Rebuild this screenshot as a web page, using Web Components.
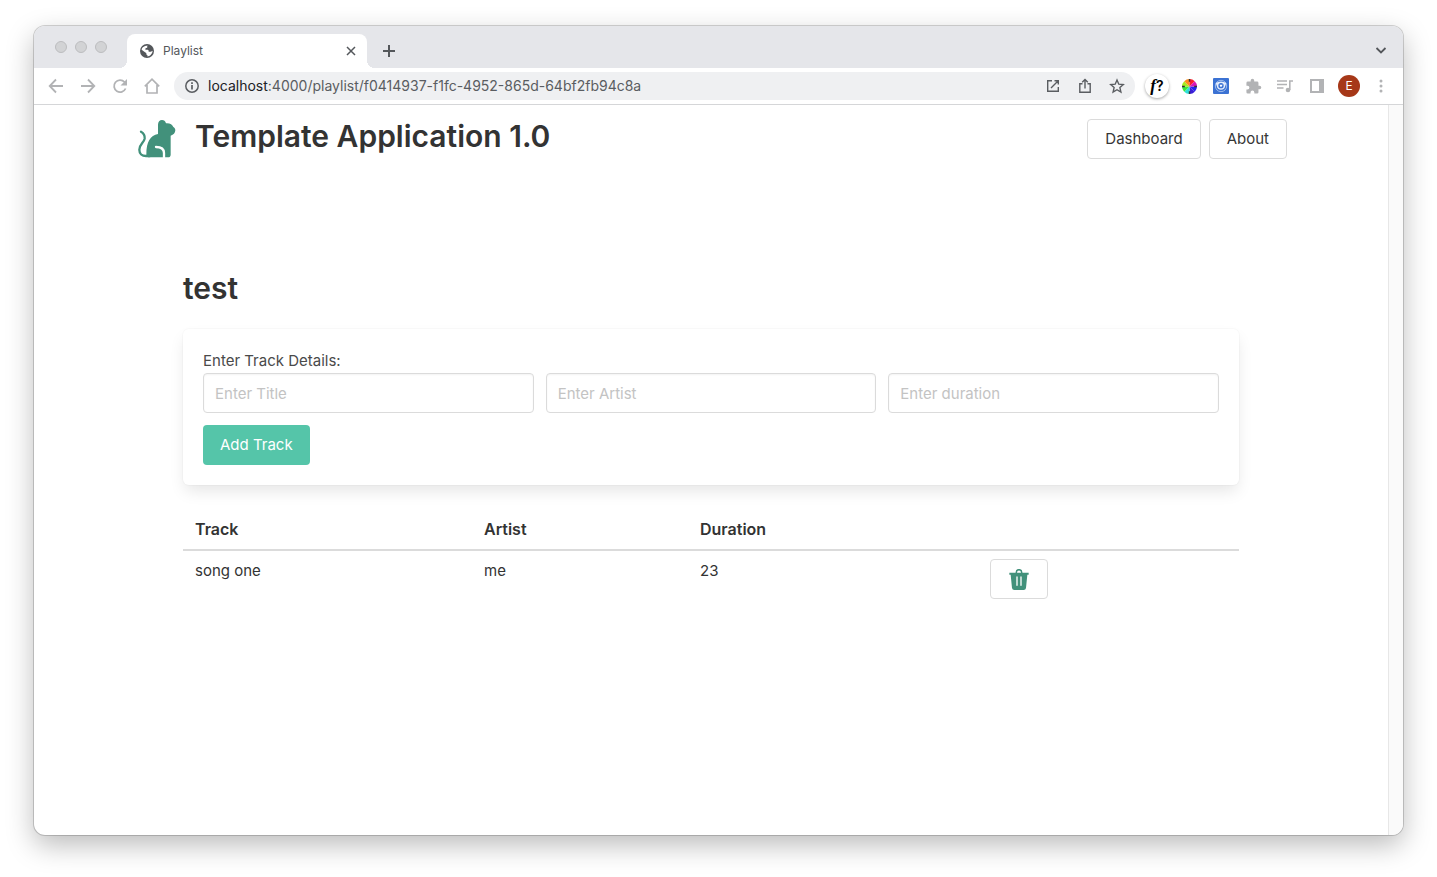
<!DOCTYPE html>
<html lang="en">
<head>
<meta charset="utf-8">
<title>Playlist</title>
<style>
  html, body { margin: 0; background: #fff; }
  body {
    min-height: 100vh; box-sizing: border-box; padding: 26px 34px 42px;
    display: flex; flex-direction: column;
    font-family: Inter, "Liberation Sans", sans-serif; font-size: 15px; line-height: 24px; color: #333;
  }
  browser-window { flex: 1; }
</style>
</head>
<body>
<browser-window>
  <tab-strip slot="chrome" label="Playlist"></tab-strip>
  <browser-toolbar slot="chrome"></browser-toolbar>
  <site-header heading="Template Application 1.0">
    <app-link href="#dashboard">Dashboard</app-link>
    <app-link href="#about">About</app-link>
  </site-header>
  <playlist-view heading="test">
    <track-form></track-form>
    <track-table></track-table>
  </playlist-view>
</browser-window>

<script>
const define = (name, render) => customElements.define(name, class extends HTMLElement {
  connectedCallback() {
    if (this.shadowRoot) return;
    this.attachShadow({ mode: 'open' }).innerHTML =
      '<style>:host,*{box-sizing:border-box}a,button,input{font:inherit;line-height:inherit}svg{display:block}</style>' + render(this);
  }
});

define('browser-window', () => `
<style>
  :host { display: flex; flex-direction: column; border-radius: 11px; overflow: hidden; background: #fff;
    box-shadow: 0 0 0 1px #00000026, 0 0 1px #00000030, 0 10px 28px #00000045; }
  .page { flex: 1; display: flex; }
  main { flex: 1; min-width: 0; }
  .track { width: 15px; background: #fafafa; border-left: 1px solid #e7e7e7; }
</style>
<slot name="chrome"></slot>
<div class="page"><main><slot></slot></main><div class="track"></div></div>`);

define('tab-strip', el => `
<style>
  :host { display: flex; height: 42px; background: #e5e6ea; color: #54575b; font-size: 12px; line-height: 16px; }
  .lights { display: flex; gap: 8px; padding: 15px 20px 0 21px; }
  .lights i { width: 12px; height: 12px; border-radius: 50%; background: #d2d3d5; border: 1px solid #bcbdbf; }
  .tab { position: relative; display: flex; align-items: center; gap: 9px; width: 240px; margin-top: 8px; padding: 0 9px 0 13px;
    background: #fff; border-radius: 8px 8px 0 0; }
  .tab::before, .tab::after { content: ""; position: absolute; bottom: 0; width: 8px; height: 8px; }
  .tab::before { right: 100%; background: radial-gradient(circle at 0 0, #0000 8px, #fff 8px); }
  .tab::after { left: 100%; background: radial-gradient(circle at 100% 0, #0000 8px, #fff 8px); }
  .tab span { flex: 1; }
  button { border: 0; background: none; padding: 0; width: 14px; height: 14px; color: inherit; }
  .new { width: 16px; height: 16px; margin: 17px 0 0 14px; }
  .more { width: 16px; height: 16px; margin: 16px 14px 0 auto; }
</style>
<div class="lights"><i></i><i></i><i></i></div>
<div class="tab">
  <svg width="14" height="14" viewBox="0 0 42 42"><circle cx="21" cy="21" r="21" fill="#54575b"/><path d="M24 5c-1 5-3 7-7 7l-1 5h7c3 0 3 3 3 6h6c3 0 4-3 6-3-1 9-8 17-17 17l2-4c-5 0-6-2-6-7l-12-9C5 10 14 4 24 5z" fill="#fff"/><path d="M14 25l6 4-1 4c-5-1-6-4-5-8zM22 5c3 0 9 1 12 6l-5 2c-4 0-3-4-7-4z" fill="#54575b"/></svg>
  <span>${el.getAttribute('label')}</span>
  <button aria-label="Close tab"><svg width="14" height="14" viewBox="0 0 14 14" stroke="currentColor" stroke-width="1.5"><path d="M3 3l8 8M11 3l-8 8"/></svg></button>
</div>
<button class="new" aria-label="New tab"><svg width="16" height="16" viewBox="0 0 16 16" stroke="currentColor" stroke-width="2"><path d="M8 2v12M2 8h12"/></svg></button>
<button class="more" aria-label="Search tabs"><svg width="16" height="16" viewBox="0 0 16 16" fill="none" stroke="currentColor" stroke-width="1.8"><path d="M3.5 6l4.500 4.500L12.500 6"/></svg></button>`);

define('tool-icon', el => `
<style>
  :host { display: flex; flex: none; }
  button { width: 32px; height: 28px; border: 0; background: none; padding: 0; display: flex; align-items: center; justify-content: center; color: inherit; }
</style>
<button aria-label="${el.getAttribute('label')}"><slot></slot></button>`);

define('browser-toolbar', () => {
  const wedge = (a, c) => {
    const p = d => (8 + 8 * Math.cos(d * Math.PI / 180)).toFixed(2) + ' ' + (8 + 8 * Math.sin(d * Math.PI / 180)).toFixed(2);
    return `<path d="M8 8L${p(a)}A8 8 0 0 1 ${p(a + 45)}z" fill="${c}"/>`;
  };
  const wheel = ['#2424f0','#3a1ed8','#2fe0d8','#38e838','#a8ec20','#ff8c1a','#f8202c','#d818b8'];
  return `
<style>
  :host { display: flex; align-items: center; height: 37px; padding: 0 6px; background: #fff; border-bottom: 1px solid #d5d6d8; color: #b2b3b5; }
  .address { flex: 1; min-width: 0; display: flex; align-items: center; height: 28px; margin: 0 6px; padding: 0 2px 0 11px;
    border-radius: 14px; background: #eff0f2; color: #5a5d61; font-size: 14px; line-height: 20px; }
  .url { flex: 1; min-width: 0; margin-left: 9px; white-space: nowrap; overflow: hidden; outline: 0; }
  .url b { font-weight: 400; color: #202124; }
  .f { width: 24px; height: 24px; border-radius: 50%; box-shadow: 0 1px 3px #00000059; color: #000;
    font: italic 600 17px/23px "Liberation Serif", serif; text-align: center; white-space: nowrap; }
  .f b { font: 600 14px/23px Inter, sans-serif; }
  .avatar { width: 22px; height: 22px; border-radius: 50%; background: #a63818; color: #fff; font-size: 12px; line-height: 22px; text-align: center; }
</style>
<tool-icon label="Back"><svg width="16" height="16" viewBox="0 0 16 16" fill="none" stroke="currentColor" stroke-width="1.8"><path d="M15 8H2M8 1.500L1.700 8 8 14.500"/></svg></tool-icon>
<tool-icon label="Forward"><svg width="16" height="16" viewBox="0 0 16 16" fill="none" stroke="currentColor" stroke-width="1.8"><path d="M1 8h13M8 1.500L14.300 8 8 14.500"/></svg></tool-icon>
<tool-icon label="Reload"><svg width="16" height="16" viewBox="0 0 16 16" fill="none" stroke="currentColor" stroke-width="1.8"><path d="M13.600 10.500A6 6 0 1 1 12.500 4L14 5.500"/><path d="M15 1v6.500H8.500z" fill="currentColor" stroke="none"/></svg></tool-icon>
<tool-icon label="Home"><svg width="16" height="16" viewBox="0 0 16 16" fill="none" stroke="currentColor" stroke-width="1.7"><path d="M.800 8.300L8 1.200l7.200 7.100M3 7v8h10V7"/></svg></tool-icon>
<div class="address">
  <svg width="14" height="14" viewBox="0 0 14 14" fill="none" stroke="currentColor" stroke-width="1.5"><circle cx="7" cy="7" r="6.200"/><path d="M7 6v4.500M7 3.300V5" stroke-width="1.700"/></svg>
  <div class="url" role="textbox" contenteditable="true" spellcheck="false" aria-label="Address"><b>localhost</b>:4000/playlist/f0414937-f1fc-4952-865d-64bf2fb94c8a</div>
  <tool-icon label="Open in app"><svg width="14" height="14" viewBox="0 0 14 14" fill="none" stroke="currentColor" stroke-width="1.400"><path d="M6 1.700H1.700v10.600h10.600V8M8.500 1.700h3.800v3.800M12 2L5 9"/></svg></tool-icon>
  <tool-icon label="Share"><svg width="14" height="16" viewBox="0 0 14 16" fill="none" stroke="currentColor" stroke-width="1.400"><path d="M4.500 5.700H1.800v8.600h10.400V5.700H9.500M7 10.500V2M4.200 4.300L7 1.500l2.800 2.800"/></svg></tool-icon>
  <tool-icon label="Bookmark"><svg width="16" height="16" viewBox="0 0 16 16" fill="none" stroke="currentColor" stroke-width="1.400"><path d="M8 2l1.800 4.200 4.500.400-3.400 3 1 4.400L8 11.700 4.100 14l1-4.400-3.400-3 4.500-.400z"/></svg></tool-icon>
</div>
<tool-icon label="Font finder"><div class="f">f<b>?</b></div></tool-icon>
<tool-icon label="Colour picker"><svg width="15" height="15" viewBox="0 0 16 16">${wheel.map((c, i) => wedge(i * 45, c)).join('')}<path d="M8 0v3M8 13v3M0 8h3M13 8h3" stroke="#333" stroke-width="1.500"/></svg></tool-icon>
<tool-icon label="Screen reader"><svg width="16" height="16" viewBox="0 0 48 48"><rect width="48" height="48" rx="3" fill="#3b72d3"/><circle cx="24" cy="24" r="17" fill="none" stroke="#9dbbec" stroke-width="3"/><path d="M8 15q16-9 32 0l-3 8q-2 12-13 12T11 23z" fill="#e3ecfb"/><circle cx="24" cy="23" r="8" fill="#3b72d3"/><path d="M20 20h9l-4 7q-5 0-5-7z" fill="#fff"/></svg></tool-icon>
<tool-icon label="Extensions"><svg width="17" height="17" viewBox="0 0 24 24" fill="currentColor"><path d="M20.500 11H19V7a2 2 0 0 0-2-2h-4V3.500a2.500 2.500 0 0 0-5 0V5H4a2 2 0 0 0-2 2v3.800h1.500a2.700 2.700 0 0 1 0 5.400H2V20a2 2 0 0 0 2 2h3.800v-1.500a2.700 2.700 0 0 1 5.400 0V22H17a2 2 0 0 0 2-2v-4h1.500a2.500 2.500 0 0 0 0-5z"/></svg></tool-icon>
<tool-icon label="Media"><svg width="16" height="14" viewBox="0 0 16 14" fill="none" stroke="currentColor" stroke-width="1.600"><path d="M0 2h10M0 5.500h10M0 9h6.500M12.800 11V2H16"/><circle cx="11" cy="11" r="2.300" fill="currentColor" stroke="none"/></svg></tool-icon>
<tool-icon label="Side panel"><svg width="14" height="14" viewBox="0 0 14 14"><path d="M1 1h12v12H1z" fill="none" stroke="currentColor" stroke-width="2"/><path d="M9 1h4v12H9z" fill="currentColor"/></svg></tool-icon>
<tool-icon label="Profile"><div class="avatar">E</div></tool-icon>
<tool-icon label="Menu"><svg width="4" height="14" viewBox="0 0 4 14" fill="currentColor"><circle cx="2" cy="2" r="1.500"/><circle cx="2" cy="7" r="1.500"/><circle cx="2" cy="12" r="1.500"/></svg></tool-icon>`;
});

define('site-header', el => `
<style>
  :host { display: block; }
  header { display: flex; align-items: flex-start; max-width: 1152px; margin: 0 auto; padding: 14px 0 14px 3px; }
  svg { margin-top: 1px; }
  h1 { flex: 1; margin: 0 0 0 19px; font-size: 30px; line-height: 34px; font-weight: 600; }
  nav { display: flex; gap: 8px; }
</style>
<header>
  <svg width="38" height="38" viewBox="54 46 114 114" fill="#42917b"><path d="M63 81c7 4 12 12 11 21-2 12-16 17-16 33 0 12 8 19 20 19h12" fill="none" stroke="#42917b" stroke-width="7" stroke-linecap="round"/><path d="M114 88V60c0-9 5-14 12-14 6 0 10 3 12 10 12-1 19 4 22 11 3 1 6 5 6 10 0 8-6 14-14 16v57c0 5-3 8-8 8H88c-5 0-9-3-9-8 0-40 12-57 35-62z"/><path d="M108 127c15 0 24 7 24 18v15" fill="none" stroke="#fff" stroke-width="7" stroke-linecap="round"/></svg>
  <h1>${el.getAttribute('heading')}</h1>
  <nav><slot></slot></nav>
</header>`);

define('app-link', el => `
<style>
  :host { display: block; }
  a { display: block; height: 40px; padding: 7px 17px; border: 1px solid #dbdbdb; border-radius: 4px; background: #fff; color: #363636; text-decoration: none; }
</style>
<a href="${el.getAttribute('href')}"><slot></slot></a>`);

define('playlist-view', el => `
<style>
  :host { display: block; max-width: 1152px; margin: 0 auto; padding: 96px 48px 48px; }
  h2 { margin: 0 0 22px; font-size: 30px; line-height: 38px; font-weight: 600; }
</style>
<h2>${el.getAttribute('heading')}</h2>
<slot></slot>`);

define('track-form', () => `
<style>
  :host { display: block; margin-bottom: 24px; }
  form { padding: 20px; border-radius: 6px; background: #fff; color: #4a4a4a; box-shadow: 0 8px 16px -2px #0a0a0a1a, 0 0 0 1px #0a0a0a05; }
  label { display: block; }
  .fields { display: grid; grid-template-columns: repeat(3, 1fr); gap: 12px; margin-bottom: 12px; }
  input { width: 100%; height: 40px; padding: 7px 11px; border: 1px solid #dbdbdb; border-radius: 4px; background: #fff; color: #363636;
    box-shadow: inset 0 1px 2px #0a0a0a0d; }
  input::placeholder { color: #c3c3c3; opacity: 1; }
  button { height: 40px; padding: 0 17px; border: 0; border-radius: 4px; background: #55c5a9; color: #fff; }
</style>
<form>
  <label for="title">Enter Track Details:</label>
  <div class="fields">
    <input id="title" placeholder="Enter Title">
    <input aria-label="Artist" placeholder="Enter Artist">
    <input aria-label="Duration" placeholder="Enter duration">
  </div>
  <button type="button">Add Track</button>
</form>`);

define('track-table', () => `
<style>
  :host { display: block; }
  table { width: 100%; border-collapse: separate; border-spacing: 0; table-layout: fixed; }
  th, td { padding: 8px 12px; text-align: left; vertical-align: top; }
  th { font-size: 16px; font-weight: 600; border-bottom: 2px solid #dbdbdb; }
  th:nth-child(1) { width: 289px; }
  th:nth-child(3) { width: 290px; }
  th:nth-child(2) { width: 216px; }
  button { display: flex; align-items: center; justify-content: center; width: 58px; height: 40px; padding: 0; border: 1px solid #dbdbdb; border-radius: 4px; background: #fff; }
</style>
<table>
  <thead><tr><th>Track</th><th>Artist</th><th>Duration</th><th></th></tr></thead>
  <tbody><tr><td>song one</td><td>me</td><td>23</td><td><button aria-label="Delete track"><svg width="20" height="21" viewBox="147 85 60 63"><path d="M169 98v-3a8 8 0 0 1 16 0v3" fill="none" stroke="#42917b" stroke-width="4.500"/><path d="M148 96h58v6h-4l-4 40q-1 6-7 6h-28q-6 0-7-6l-4-40h-4z" fill="#42917b"/><path d="M171 109v25M183 109v25" stroke="#fff" stroke-width="4" stroke-linecap="round"/></svg></button></td></tr></tbody>
</table>`);
</script>
</body>
</html>
